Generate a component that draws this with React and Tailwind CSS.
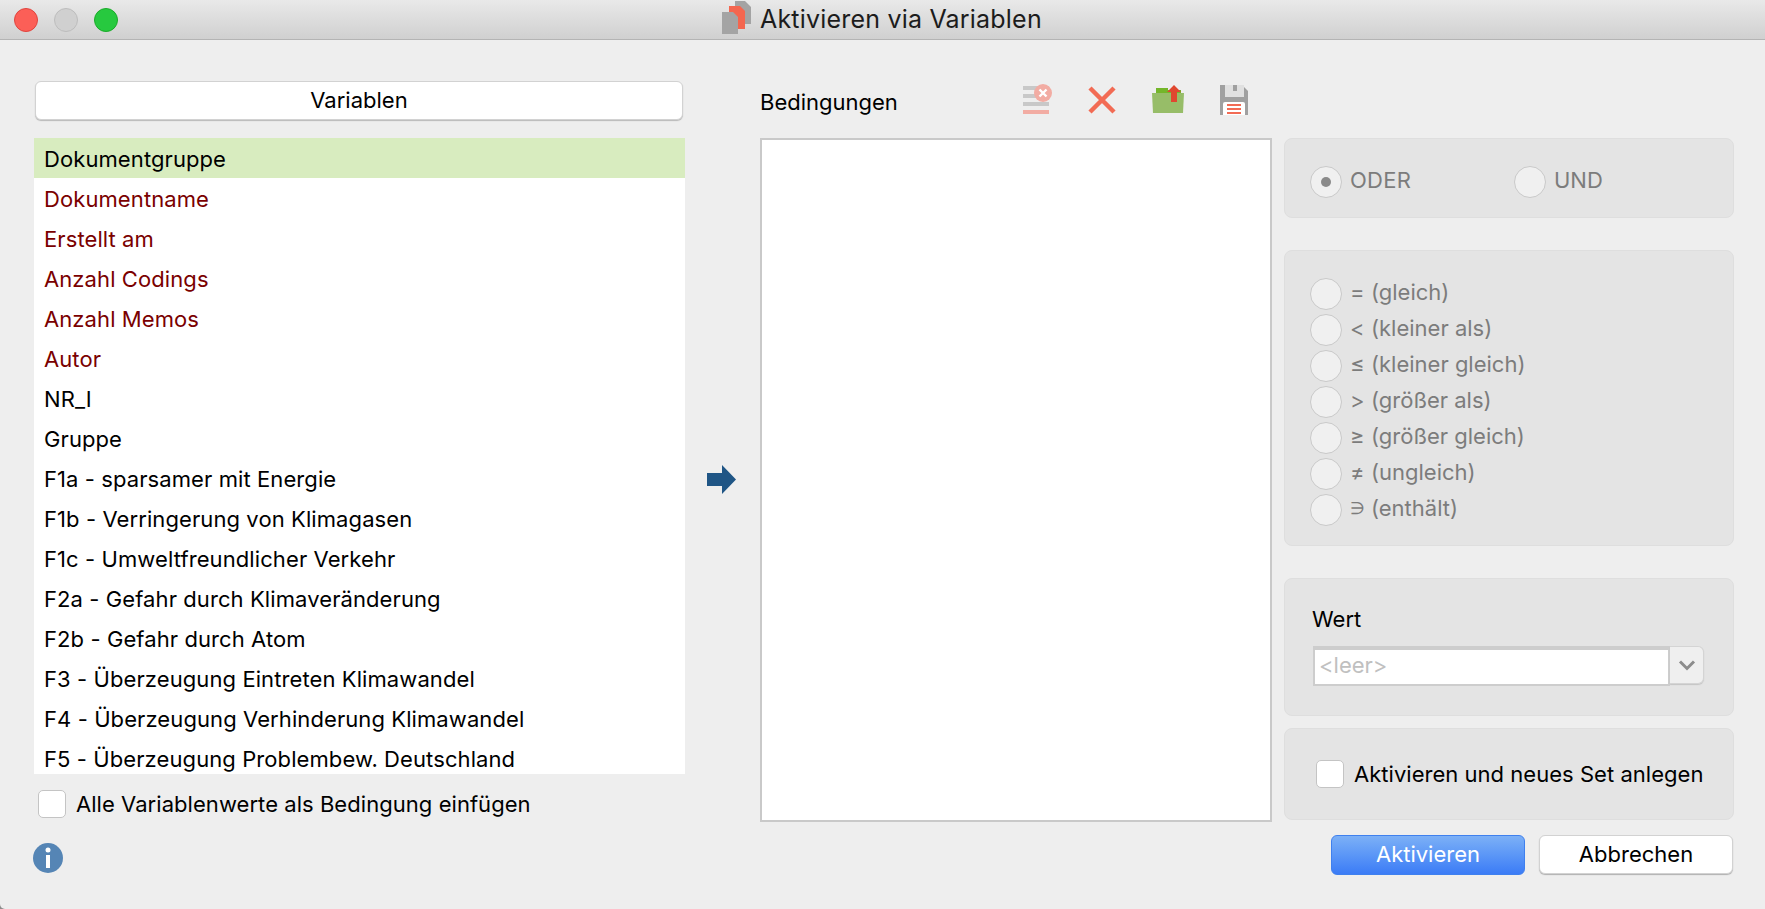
const rows = [
  ["Dokumentgruppe", "sel"],
  ["Dokumentname", "sys"],
  ["Erstellt am", "sys"],
  ["Anzahl Codings", "sys"],
  ["Anzahl Memos", "sys"],
  ["Autor", "sys"],
  ["NR_I", ""],
  ["Gruppe", ""],
  ["F1a - sparsamer mit Energie", ""],
  ["F1b - Verringerung von Klimagasen", ""],
  ["F1c - Umweltfreundlicher Verkehr", ""],
  ["F2a - Gefahr durch Klimaveränderung", ""],
  ["F2b - Gefahr durch Atom", ""],
  ["F3 - Überzeugung Eintreten Klimawandel", ""],
  ["F4 - Überzeugung Verhinderung Klimawandel", ""],
  ["F5 - Überzeugung Problembew. Deutschland", ""],
];
const ops = [
  ["=", "(gleich)"],
  ["<", "(kleiner als)"],
  ["≤", "(kleiner gleich)"],
  [">", "(größer als)"],
  ["≥", "(größer gleich)"],
  ["≠", "(ungleich)"],
  ["∋", "(enthält)"],
];

function Radio({ on }) {
  return (
    <span className="flex h-8 w-8 shrink-0 items-center justify-center rounded-full border border-[#c9c9c9] bg-[#f0f0f0]">
      {on && <span className="h-2.5 w-2.5 rounded-full bg-[#8a8a8a]" />}
    </span>
  );
}

function Check({ className }) {
  return <span className={"block h-7 shrink-0 rounded-[5px] border border-[#c4c4c4] bg-white " + className} />;
}

function Panel({ className, children }) {
  return <div className={"w-full rounded-lg border border-[#dedede] bg-[#e4e4e4] " + className}>{children}</div>;
}

export default function App() {
  return (
    <div className="h-[909px] w-[1765px] bg-[#8c8c8c]">
      <div className="flex h-[909px] w-[1765px] flex-col overflow-hidden rounded-bl-[5px] bg-[#eeeeee] font-['Inter','Liberation_Sans',sans-serif] text-[22px] text-black">
        <div className="relative flex h-10 shrink-0 items-center border-b border-[#b4b4b4] bg-gradient-to-b from-[#e9e9e9] to-[#d0d0d0]">
          <span className="ml-[14px] h-6 w-6 rounded-full border border-[#e0443e] bg-[#fc5f57]" />
          <span className="ml-4 h-6 w-6 rounded-full border border-[#bdbdbd] bg-[#d0d0d0]" />
          <span className="ml-4 h-6 w-6 rounded-full border border-[#1aab29] bg-[#27c93f]" />
          <svg className="ml-[604px] h-[34px] w-[30px] self-start" viewBox="0 0 30 34">
            <path d="M13 1h10l6 6v17H13z" fill="#a3a3a3" />
            <path d="M7 6h11l5 5v18H7z" fill="#f4664f" />
            <path d="M0 12h11l5 5v17H0z" fill="#a4a4a4" />
          </svg>
          <span className="ml-[8px] text-[25px] tracking-[0.2px] text-[#1c1c1c]">Aktivieren via Variablen</span>
        </div>

        <div className="flex min-h-0 flex-1">
          <div className="ml-[34px] flex w-[651px] shrink-0 flex-col pt-[41px]">
            <button className="ml-px h-[39px] w-[648px] rounded-[6px] border border-[#d2d2d2] bg-white shadow-[0_1px_1px_#b8b8b8]">Variablen</button>
            <div className="mt-[18px] h-[636px] overflow-hidden bg-white">
              {rows.map(([t, k]) => (
                <div key={t} className={"flex h-10 items-center pl-[10px] pt-[2px] tracking-[0.09px] " + (k === "sel" ? "bg-[#d8ecbf]" : "") + (k === "sys" ? " text-[#7a0000]" : "")}>{t}</div>
              ))}
            </div>
            <label className="mt-4 flex h-7 items-center">
              <Check className="ml-1 w-7" />
              <span className="ml-[10px] tracking-[0.05px]">Alle Variablenwerte als Bedingung einfügen</span>
            </label>
            <svg className="-ml-px mt-[25px] h-[30px] w-[30px] shrink-0" viewBox="0 0 30 30">
              <circle cx="15" cy="15" r="15" fill="#5585b5" />
              <circle cx="15" cy="7" r="2.5" fill="#fff" />
              <path d="M13 12h4v13h-4z" fill="#fff" />
            </svg>
          </div>

          <div className="flex w-[76px] shrink-0 items-start justify-start pl-[22px] pt-[425px]">
            <svg className="h-[29px] w-[29px]" viewBox="0 0 29 29">
              <path d="M0 8h15V0l14 14.5L15 29v-8H0z" fill="#1f5585" />
            </svg>
          </div>

          <div className="-ml-px flex w-[512px] shrink-0 flex-col pt-[42px]">
            <div className="flex h-[56px] items-start">
              <span className="mt-1 w-[263px]">Bedingungen</span>
              <svg className="mt-[2px] h-[30px] w-[30px]" viewBox="0 0 30 30">
                <path d="M0 2h26v4H0zM0 10h26v4H0zM0 18h26v4H0z" fill="#c8c8c8" />
                <path d="M0 26h26v4H0z" fill="#f2aca3" />
                <circle cx="20" cy="9" r="9" fill="#f2aca3" />
                <path d="M16.5 5.5l7 7m0-7l-7 7" stroke="#fff" strokeWidth="2.4" />
              </svg>
              <svg className="ml-[34px] mt-[3px] h-[30px] w-[30px]" viewBox="0 0 30 30">
                <path d="M3 3l24 24M27 3L3 27" stroke="#f26b54" strokeWidth="4.5" />
              </svg>
              <svg className="ml-[35px] mt-[3px] h-[30px] w-[32px]" viewBox="0 0 32 30">
                <path d="M4 3h12v5H4z" fill="#74b62a" />
                <path d="M16 5h13v4H16z" fill="#74b62a" />
                <path d="M0 8h32l-1 20H1z" fill="#97bd68" />
                <path d="M22 0l7 7h-4v10h-6V7h-4z" fill="#e0472f" />
              </svg>
              <svg className="ml-9 mt-[3px] h-[30px] w-[28px]" viewBox="0 0 28 30">
                <path d="M0 0h22l6 6v24H0z" fill="#a0a0a0" />
                <path d="M5 0h19v12H5z" fill="#e0e0e0" />
                <path d="M13 0h4v6h-4z" fill="#a0a0a0" />
                <path d="M3 30V19a2 2 0 012-2h18a2 2 0 012 2v11z" fill="#fff" />
                <path d="M7 19h14v2H7zM7 23h14v2H7zM7 27h14v2H7z" fill="#f26b54" />
              </svg>
            </div>
            <div className="h-[684px] border-2 border-[#c9c9c9] bg-white" />
          </div>

          <div className="ml-3 flex w-[450px] shrink-0 flex-col pt-[98px]">
            <Panel className="flex h-20 items-center pl-[25px] pt-2 text-[#7c7c7c]">
              <Radio on />
              <span className="mb-[3px] ml-2 w-[164px] tracking-[0.3px]">ODER</span>
              <Radio />
              <span className="mb-[3px] ml-2">UND</span>
            </Panel>
            <Panel className="mt-8 flex h-[296px] flex-col gap-1 pl-[25px] pt-[27px] text-[#7c7c7c]">
              {ops.map(([s, o]) => (
                <div key={o} className="flex h-8 items-center">
                  <Radio />
                  <span className={"mb-[3px] ml-2 w-[21px] " + (s === "∋" ? "text-[17px]" : "")}>{s}</span>
                  <span className="mb-[3px]">{o}</span>
                </div>
              ))}
            </Panel>
            <Panel className="mt-8 h-[138px] pl-[28px] pt-[26px]">
              <div className="-ml-px leading-7">Wert</div>
              <div className="mt-[13px] flex h-10 w-[391px]">
                <div className="flex h-10 w-[357px] items-center border-2 border-t-[4px] border-[#cdcdcd] bg-white pb-[3px] pl-1 text-[#c0c0c0]">&lt;leer&gt;</div>
                <div className="flex h-[38px] flex-1 items-center justify-center rounded-r-[6px] border border-l-0 border-[#d4d4d4] bg-[#efefef] shadow-[0_1px_1px_#c4c4c4]">
                  <svg className="h-[12px] w-[18px]" viewBox="0 0 18 12">
                    <path d="M2 2.5l7 7 7-7" fill="none" stroke="#8c8c8c" strokeWidth="3" />
                  </svg>
                </div>
              </div>
            </Panel>
            <Panel className="mt-3 flex h-[92px] items-center pl-[31px]">
              <Check className="w-7" />
              <span className="ml-[10px] tracking-[0.03px]">Aktivieren und neues Set anlegen</span>
            </Panel>
            <div className="mt-[15px] flex justify-end gap-[14px] pr-px">
              <button className="h-10 w-[194px] rounded-[6px] border border-[#3f80ee] bg-gradient-to-b from-[#7cb0f6] to-[#3b7bf6] pb-[2px] text-white">Aktivieren</button>
              <button className="h-[39px] w-[194px] rounded-[6px] border border-[#d2d2d2] bg-white pb-px shadow-[0_1px_1px_#b0b0b0]">Abbrechen</button>
            </div>
          </div>
        </div>
      </div>
    </div>
  );
}
